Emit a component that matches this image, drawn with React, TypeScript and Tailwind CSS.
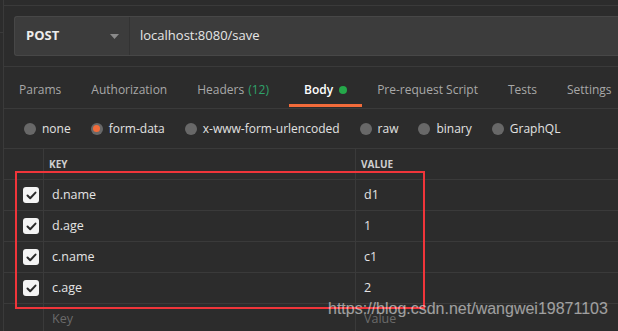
const tabs = [
  { label: "Params" },
  { label: "Authorization" },
  { label: "Headers", count: "(12)" },
  { label: "Body", active: true },
  { label: "Pre-request Script" },
  { label: "Tests" },
  { label: "Settings" },
];

const modes = [
  { label: "none" },
  { label: "form-data", checked: true },
  { label: "x-www-form-urlencoded" },
  { label: "raw" },
  { label: "binary" },
  { label: "GraphQL" },
];

const rows = [
  { key: "d.name", value: "d1" },
  { key: "d.age", value: "1" },
  { key: "c.name", value: "c1" },
  { key: "c.age", value: "2" },
];

function Check() {
  return (
    <div className="w-4 h-4 rounded-[3px] bg-[#f4f4f4] flex items-center justify-center">
      <svg width="11" height="9" viewBox="0 0 11 9" fill="none">
        <path d="M1.5 4.5 L4.2 7.2 L9.5 1.6" stroke="#2a2a2a" strokeWidth="2" strokeLinecap="round" strokeLinejoin="round" />
      </svg>
    </div>
  );
}

export default function App() {
  return (
    <div
      className="relative w-[618px] h-[331px] overflow-hidden bg-[#2c2c2c] flex text-[12.5px]"
      style={{ fontFamily: '"Open Sans", "Noto Sans", sans-serif' }}
    >
      {/* left sidebar edge */}
      <div className="w-[4px] shrink-0 border-r border-[#3a3a3a] flex flex-col">
        <div className="h-[33px] border-b border-[#3a3a3a]" />
      </div>

      <div className="flex-1 flex flex-col">
        <div className="h-[6px] border-b border-[#3a3a3a] shrink-0" />

        {/* request bar */}
        <div className="h-[61px] border-b border-[#3a3a3a] pt-[10px] pl-[10px] shrink-0">
          <div className="h-[40px] flex bg-[#3c3c3c] border border-[#474747] border-r-0 rounded-l-[3px]">
            <div className="w-[115px] flex items-center justify-between pl-[11px] pr-[10px] border-r border-[#333333]">
              <span className="font-bold text-[#ececec] text-[13px]">POST</span>
              <svg width="9" height="5" viewBox="0 0 9 5">
                <path d="M0 0 H9 L4.5 5 Z" fill="#8a8a8a" />
              </svg>
            </div>
            <div className="flex items-center pl-[10px] text-[#e6e6e6] text-[13px]">localhost:8080/save</div>
          </div>
        </div>

        {/* tabs */}
        <div className="h-[42px] border-b border-[#3a3a3a] flex items-stretch pl-[15px] shrink-0 whitespace-nowrap text-[12px]">
          {tabs.map((t) => (
            <div
              key={t.label}
              className={`relative flex items-center pt-[4px] px-[15px] first:pl-0 ${
                t.active ? "ml-[5px] text-white font-semibold" : "text-[#a8a8a8]"
              }`}
            >
              <span>{t.label}</span>
              {t.count && <span className="ml-1 text-[#2fa36b]">{t.count}</span>}
              {t.active && <span className="ml-[6px] w-[8px] h-[8px] rounded-full bg-[#25a84a]" />}
              {t.active && <span className="absolute left-0 right-0 bottom-[1px] h-[3px] bg-[#f26b3a]" />}
            </div>
          ))}
        </div>

        {/* body modes */}
        <div className="h-[40px] border-b border-[#3a3a3a] flex items-center pl-[20px] gap-[20px] shrink-0 whitespace-nowrap text-[12px]">
          {modes.map((m) => (
            <div key={m.label} className="flex items-center gap-[6px] text-[#e2e2e2]">
              <span className="w-[12px] h-[12px] rounded-full bg-[#686868] flex items-center justify-center">
                {m.checked && <span className="w-[7px] h-[7px] rounded-full bg-[#f26b3a]" />}
              </span>
              <span>{m.label}</span>
            </div>
          ))}
        </div>

        {/* table */}
        <div className="flex flex-col">
          <div className="h-[31px] flex border-b border-[#3a3a3a]">
            <div className="w-[40px] border-r border-[#3a3a3a]" />
            <div className="w-[312px] border-r border-[#3a3a3a] flex items-center pl-[5px] text-[10px] font-bold text-[#cfcfcf]">KEY</div>
            <div className="flex-1 flex items-center pl-[5px] text-[10px] font-bold text-[#cfcfcf]">VALUE</div>
          </div>
          {rows.map((r) => (
            <div key={r.key} className="h-[31px] flex border-b border-[#3a3a3a]">
              <div className="w-[40px] border-r border-[#3a3a3a] flex items-center justify-end pr-[4px]">
                <Check />
              </div>
              <div className="w-[312px] border-r border-[#3a3a3a] flex items-center pl-[8px] text-[#e4e4e4]">{r.key}</div>
              <div className="flex-1 flex items-center pl-[8px] text-[#e4e4e4]">{r.value}</div>
            </div>
          ))}
          <div className="h-[31px] flex">
            <div className="w-[40px] border-r border-[#3a3a3a]" />
            <div className="w-[312px] border-r border-[#3a3a3a] flex items-center pl-[8px] text-[#6a6a6a]">Key</div>
            <div className="flex-1 flex items-center pl-[8px] text-[#6a6a6a]">Value</div>
          </div>
        </div>
      </div>

      {/* annotation box */}
      <div className="absolute left-[15px] top-[171px] w-[410px] h-[138px] border-2 border-[#f0353a] pointer-events-none" />

      {/* watermark */}
      <div
        className="absolute left-[328px] top-[299px] text-[16px] leading-[20px] text-white/55 whitespace-nowrap"
        style={{ fontFamily: '"Liberation Sans", Arial, sans-serif' }}
      >
        https://blog.csdn.net/wangwei19871103
      </div>
    </div>
  );
}
